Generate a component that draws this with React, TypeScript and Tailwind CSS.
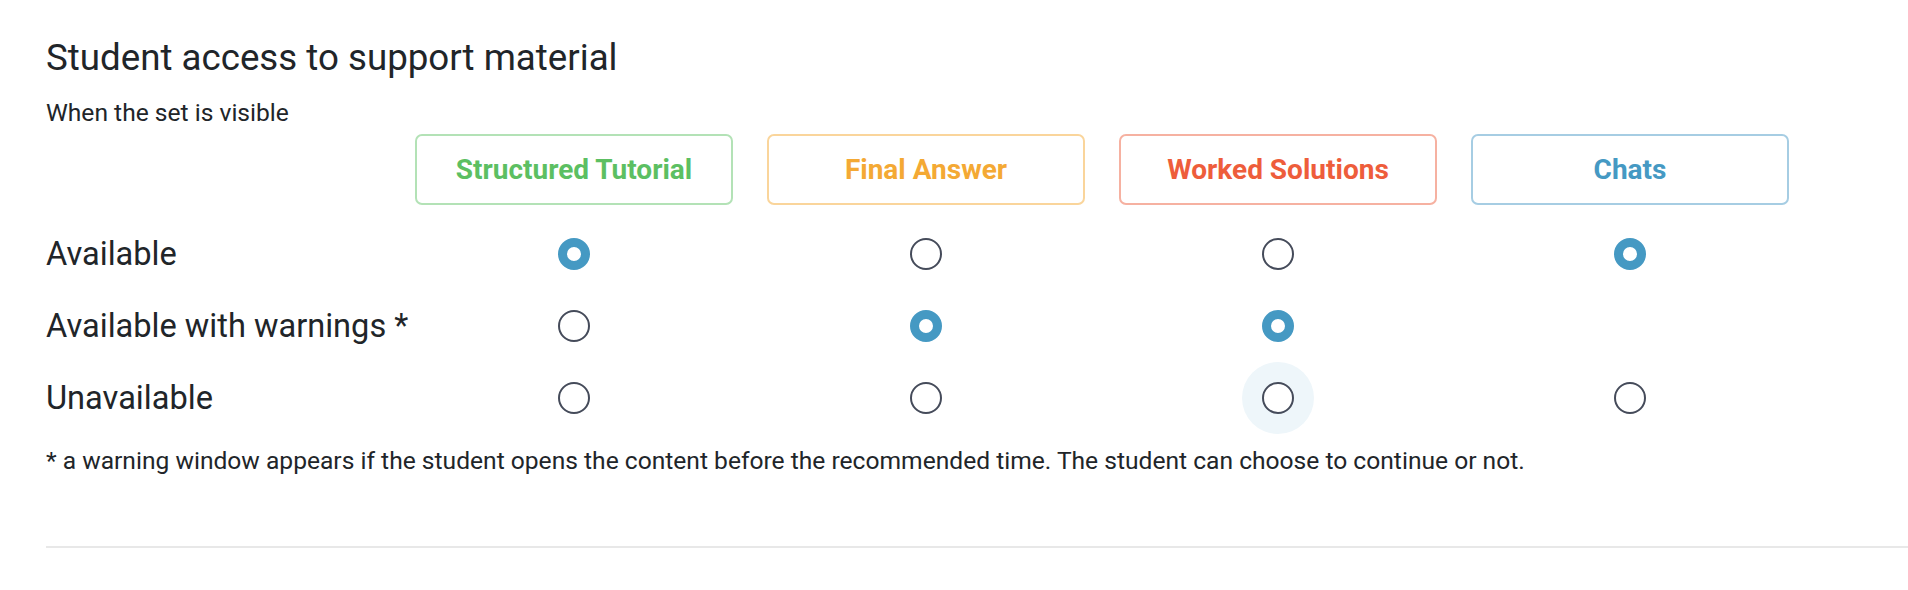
import React from "react";

type Col = { label: string; text: string; border: string };

const cols: Col[] = [
  { label: "Structured Tutorial", text: "text-[#5cbf62]", border: "border-[#b3e2b6]" },
  { label: "Final Answer", text: "text-[#f4a934]", border: "border-[#fad59b]" },
  { label: "Worked Solutions", text: "text-[#ee5d3b]", border: "border-[#f6b1a1]" },
  { label: "Chats", text: "text-[#4599c3]", border: "border-[#a6cde3]" },
];

type Cell = "on" | "off" | "none" | "hover";

const rows: { label: string; cells: Cell[] }[] = [
  { label: "Available", cells: ["on", "off", "off", "on"] },
  { label: "Available with warnings *", cells: ["off", "on", "on", "none"] },
  { label: "Unavailable", cells: ["off", "off", "hover", "off"] },
];

function Radio({ state }: { state: Cell }) {
  if (state === "none") return null;
  const on = state === "on";
  return (
    <div className="relative flex h-[72px] w-[72px] items-center justify-center">
      {state === "hover" && (
        <div className="absolute inset-0 rounded-full bg-[#eef6fa]" />
      )}
      <div
        className={
          on
            ? "relative h-[32px] w-[32px] rounded-full border-[9px] border-[#4599c3] bg-white"
            : "relative h-[32px] w-[32px] rounded-full border-2 border-[#454b5a] bg-white"
        }
      />
    </div>
  );
}

export default function App() {
  return (
    <div
      className="h-[590px] w-full bg-white text-[#212529]"
      style={{ fontFamily: "Roboto, 'Noto Sans', sans-serif" }}
    >
      <div className="pl-[46px] pt-[36px]">
        <h1 className="text-[36.7px] font-normal leading-[43px]">
          Student access to support material
        </h1>
        <p className="mt-[20px] text-[24.6px] leading-[28px]">When the set is visible</p>

        <div className="mt-[7px] grid grid-cols-[335px_318px_318px_318px_318px] gap-x-[34px]">
          <div />
          {cols.map((c) => (
            <div
              key={c.label}
              className={`flex h-[71px] items-center justify-center rounded-[7px] border-2 ${c.border}`}
            >
              <span className={`text-[28px] font-bold leading-[34px] ${c.text}`}>{c.label}</span>
            </div>
          ))}
        </div>

        <div className="mt-[13px] grid grid-cols-[335px_318px_318px_318px_318px] gap-x-[34px]">
          {rows.map((r) => (
            <React.Fragment key={r.label}>
              <div className="flex h-[72px] items-center whitespace-nowrap text-[32.6px] leading-[38px]">
                {r.label}
              </div>
              {r.cells.map((s, i) => (
                <div key={i} className="flex h-[72px] items-center justify-center">
                  <Radio state={s} />
                </div>
              ))}
            </React.Fragment>
          ))}
        </div>

        <p className="mt-[13px] text-[24.6px] leading-[28px]">
          * a warning window appears if the student opens the content before the recommended time. The
          student can choose to continue or not.
        </p>

        <div className="mt-[71px] h-[2px] w-full bg-[#e8e8e8]" />
      </div>
    </div>
  );
}
